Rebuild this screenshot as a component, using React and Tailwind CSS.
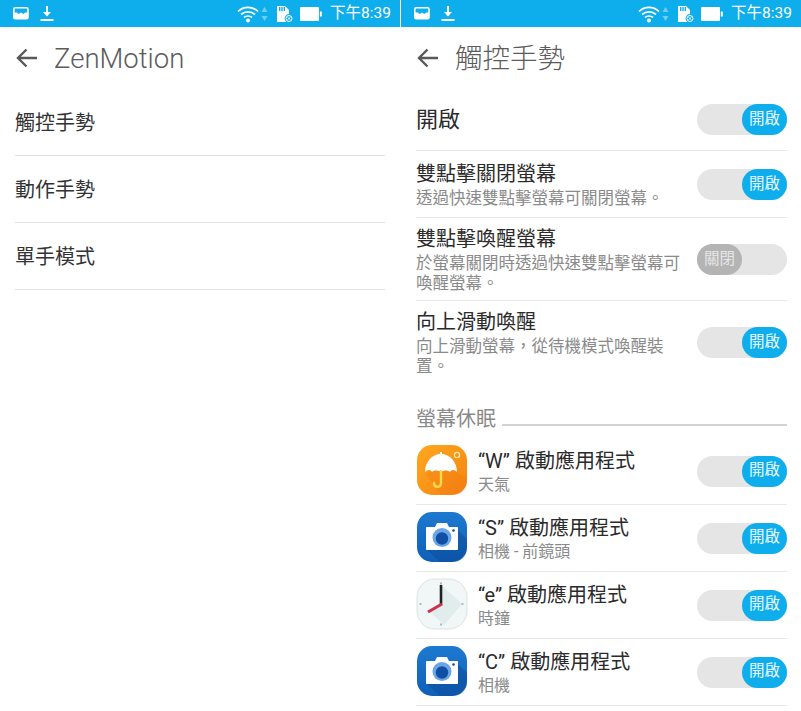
const FONT = "font-['Roboto','Noto_Sans_CJK_TC',sans-serif]";

function StatusBar() {
  return (
    <div className="h-[27px] bg-[#0eaeec] flex items-center text-white shrink-0">
      <svg width="16" height="13" viewBox="0 0 16 13" className="ml-[12.5px]">
        <rect x="0.8" y="0.8" width="14.2" height="11" rx="1.5" fill="none" stroke="white" strokeWidth="1.6" />
        <path d="M1 11V5.5h3l1.5 1.5L8 5.5l2.5 1.5L12 5.5h3V11z" fill="white" />
      </svg>
      <svg width="14" height="16" viewBox="0 0 14 16" className="ml-[11.5px]">
        <path d="M6 0h2v6h3l-4 4.5L3 6h3z" fill="white" />
        <rect x="0.5" y="13" width="13" height="2" fill="white" />
      </svg>
      <svg width="22" height="18" viewBox="0 0 22 18" className="ml-[183px]">
        <g fill="none" stroke="white" strokeWidth="1.7">
          <path d="M1 6.5C6.5 1 15.5 1 21 6.5" />
          <path d="M4 9.5c4-3.6 10-3.6 14 0" />
          <path d="M7 12.4c2.3-1.9 5.7-1.9 8 0" />
        </g>
        <circle cx="11" cy="15.6" r="2" fill="white" />
      </svg>
      <svg width="7" height="16" viewBox="0 0 7 16" className="ml-[1.5px]">
        <path d="M3.5 1L6.5 6H0.5z" fill="#6fcdf2" />
        <path d="M3.5 15L6.5 10H0.5z" fill="#6fcdf2" />
      </svg>
      <svg width="18" height="18" viewBox="0 0 18 18" className="ml-[8px]">
        <path d="M1 1h8l4 4v12H1z" fill="white" />
        <rect x="3" y="2" width="1.4" height="4" fill="#0eaeec" />
        <rect x="5.3" y="2" width="1.4" height="4" fill="#0eaeec" />
        <rect x="7.6" y="2" width="1.4" height="4" fill="#0eaeec" />
        <circle cx="13" cy="13.5" r="4.4" fill="#0eaeec" />
        <circle cx="13" cy="13.5" r="3" fill="none" stroke="white" strokeWidth="1" />
        <path d="M11.7 12.2l2.6 2.6M14.3 12.2l-2.6 2.6" stroke="white" strokeWidth="0.9" />
      </svg>
      <svg width="22" height="14" viewBox="0 0 22 14" className="ml-[6px]">
        <rect x="0" y="0" width="19" height="14" rx="1" fill="white" />
        <rect x="19.8" y="4.5" width="2" height="5" fill="white" />
      </svg>
      <span className={`${FONT} ml-[8.5px] text-[15.5px] leading-none whitespace-nowrap`}>下午8:39</span>
    </div>
  );
}

function Header({ title, h }) {
  return (
    <div className={`${h} flex items-center shrink-0 pl-[16px]`}>
      <svg width="22" height="20" viewBox="0 0 22 20" className="shrink-0 mb-[3px]">
        <path d="M21 10H2M10.5 1.5L2 10l8.5 8.5" fill="none" stroke="#595959" strokeWidth="2.4" />
      </svg>
      <span className="ml-[16px] text-[27.5px] leading-none text-[#5c5c5c] whitespace-nowrap font-light">{title}</span>
    </div>
  );
}

function Toggle({ on = true }) {
  return (
    <div className={`w-[90px] h-[31px] rounded-full bg-[#e5e5e5] shrink-0 flex ${on ? "justify-end" : "justify-start"}`}>
      <div className={`w-[45px] h-[31px] rounded-full flex items-center justify-center text-[15.5px] leading-none ${on ? "bg-[#0eaeec] text-[#e8f7fd]" : "bg-[#b4b4b4] text-[#e6e6e6]"}`}>
        {on ? "開啟" : "關閉"}
      </div>
    </div>
  );
}

function Row({ title, sub, on, h, top, big, tmt, noBorder }) {
  return (
    <div className={`flex items-start justify-between ${noBorder ? "" : "border-b border-[#e8e8e8]"} ${h}`}>
      <div className={`w-[272px] ${top}`}>
        <div className={`${big ? "text-[22px] leading-[30px]" : "text-[20px] leading-[26px]"} text-[#2b2b2b]`}>{title}</div>
        {sub && <div className="text-[16.5px] leading-[20px] mt-[2px] text-[#8a8a8a]">{sub}</div>}
      </div>
      <div className={tmt}>
        <Toggle on={on} />
      </div>
    </div>
  );
}

function IconFrame({ children }) {
  return (
    <svg width="52" height="52" viewBox="0 0 52 52" className="shrink-0 mb-[2px]">
      {children}
    </svg>
  );
}

function Weather() {
  return (
    <IconFrame>
      <defs>
        <linearGradient id="wg" x1="0" y1="0" x2="1" y2="1">
          <stop offset="0" stopColor="#ffa81f" />
          <stop offset="1" stopColor="#f58212" />
        </linearGradient>
      </defs>
      <rect x="1" y="1" width="50" height="50" rx="15" fill="url(#wg)" />
      <path d="M25 51L10 30l15-10 26 14v3c0 8-6 14-14 14z" fill="#f07c10" opacity="0.35" />
      <path d="M25 8v3" stroke="white" strokeWidth="2" />
      <path d="M9 28c0-10 7-18 16-18s16 8 16 18c-2-2-5-3-7 0-2-2-6-2-9 0-3-2-7-2-9 0-2-3-5-2-7 0z" fill="white" />
      <path d="M25 27v12c0 5-7 5-7 0" fill="none" stroke="#ffd84d" strokeWidth="2.4" strokeLinecap="round" />
      <circle cx="41" cy="11" r="2.6" fill="none" stroke="#ffe9a8" strokeWidth="1.3" />
    </IconFrame>
  );
}

function Camera({ id }) {
  return (
    <IconFrame>
      <defs>
        <linearGradient id={id} x1="0" y1="0" x2="0" y2="1">
          <stop offset="0" stopColor="#1d7ad0" />
          <stop offset="1" stopColor="#0f5fb8" />
        </linearGradient>
      </defs>
      <rect x="1" y="1" width="50" height="50" rx="15" fill={`url(#${id})`} />
      <path d="M10 38L24 51h13c8 0 14-6 14-14V28L42 19z" fill="#0b4a94" opacity="0.45" />
      <path d="M11 16h8l2-4h10l2 4h8c.6 0 1 .4 1 1v21c0 .6-.4 1-1 1H11c-.6 0-1-.4-1-1V17c0-.6.4-1 1-1z" fill="white" />
      <circle cx="26" cy="26.5" r="9.5" fill="#6aa5e8" />
      <circle cx="26" cy="27.5" r="6.2" fill="#0f4fa6" />
      <circle cx="37.5" cy="19.5" r="1.3" fill="#114f9e" />
    </IconFrame>
  );
}

function Clock() {
  return (
    <IconFrame>
      <rect x="1" y="1" width="50" height="50" rx="18" fill="#f1f7f7" stroke="#d5dcdc" strokeWidth="0.8" />
      <path d="M25 26V7l21 19-18 21-14-13z" fill="#dde8ea" opacity="0.8" />
      <path d="M25 4.5v2M25 45.5v2M3.5 26h2M45.5 26h2" stroke="#9aa5a8" strokeWidth="1.6" />
      <path d="M25 27V7" stroke="#222" strokeWidth="2.6" />
      <path d="M26 26L12 34" stroke="#d0304f" strokeWidth="3" />
    </IconFrame>
  );
}

function AppRow({ title, sub, icon }) {
  return (
    <div className="h-[67px] flex items-center justify-between border-b border-[#e8e8e8]">
      <div className="flex items-center">
        {icon}
        <div className="ml-[10px] pt-[2px]">
          <div className="text-[20px] leading-[26px] text-[#2b2b2b] whitespace-nowrap">{title}</div>
          <div className="text-[16px] leading-[22px] text-[#8a8a8a] whitespace-nowrap">{sub}</div>
        </div>
      </div>
      <Toggle />
    </div>
  );
}

export default function App() {
  return (
    <div className={`${FONT} w-[801px] h-[711px] flex bg-white overflow-hidden`}>
      <div className="w-[400px] flex flex-col">
        <StatusBar />
        <Header title="ZenMotion" h="h-[62px] pt-[2px]" />
        <div className="px-[15px] text-[20px] text-[#333]">
          {["觸控手勢", "動作手勢", "單手模式"].map((t) => (
            <div key={t} className="h-[67px] flex items-center border-b border-[#e2e2e2] pt-[1px]">{t}</div>
          ))}
        </div>
      </div>
      <div className="w-[400px] ml-[1px] flex flex-col">
        <StatusBar />
        <Header title="觸控手勢" h="h-[66px] pb-[2px]" />
        <div className="pl-[15px] pr-[14px] flex flex-col">
          <Row title="開啟" big h="h-[58px]" top="pt-[12px]" tmt="mt-[11px]" />
          <Row title="雙點擊關閉螢幕" sub="透過快速雙點擊螢幕可關閉螢幕。" h="h-[67px]" top="pt-[10px]" tmt="mt-[18px]" />
          <Row title="雙點擊喚醒螢幕" sub="於螢幕關閉時透過快速雙點擊螢幕可喚醒螢幕。" on={false} h="h-[83px]" top="pt-[8px]" tmt="mt-[26px]" />
          <Row title="向上滑動喚醒" sub="向上滑動螢幕，從待機模式喚醒裝置。" h="h-[99px]" top="pt-[8px]" tmt="mt-[26px]" noBorder />
          <div className="flex items-end h-[32px]">
            <span className="text-[20px] leading-[26px] text-[#8a8a8a] whitespace-nowrap">螢幕休眠</span>
            <div className="flex-1 h-[2px] bg-[#d2d2d6] ml-[6px] mb-[6px]" />
          </div>
          <div className="h-[6px]" />
          <AppRow title="“W” 啟動應用程式" sub="天氣" icon={<Weather />} />
          <AppRow title="“S” 啟動應用程式" sub="相機 - 前鏡頭" icon={<Camera id="c1" />} />
          <AppRow title="“e” 啟動應用程式" sub="時鐘" icon={<Clock />} />
          <AppRow title="“C” 啟動應用程式" sub="相機" icon={<Camera id="c2" />} />
        </div>
      </div>
    </div>
  );
}
